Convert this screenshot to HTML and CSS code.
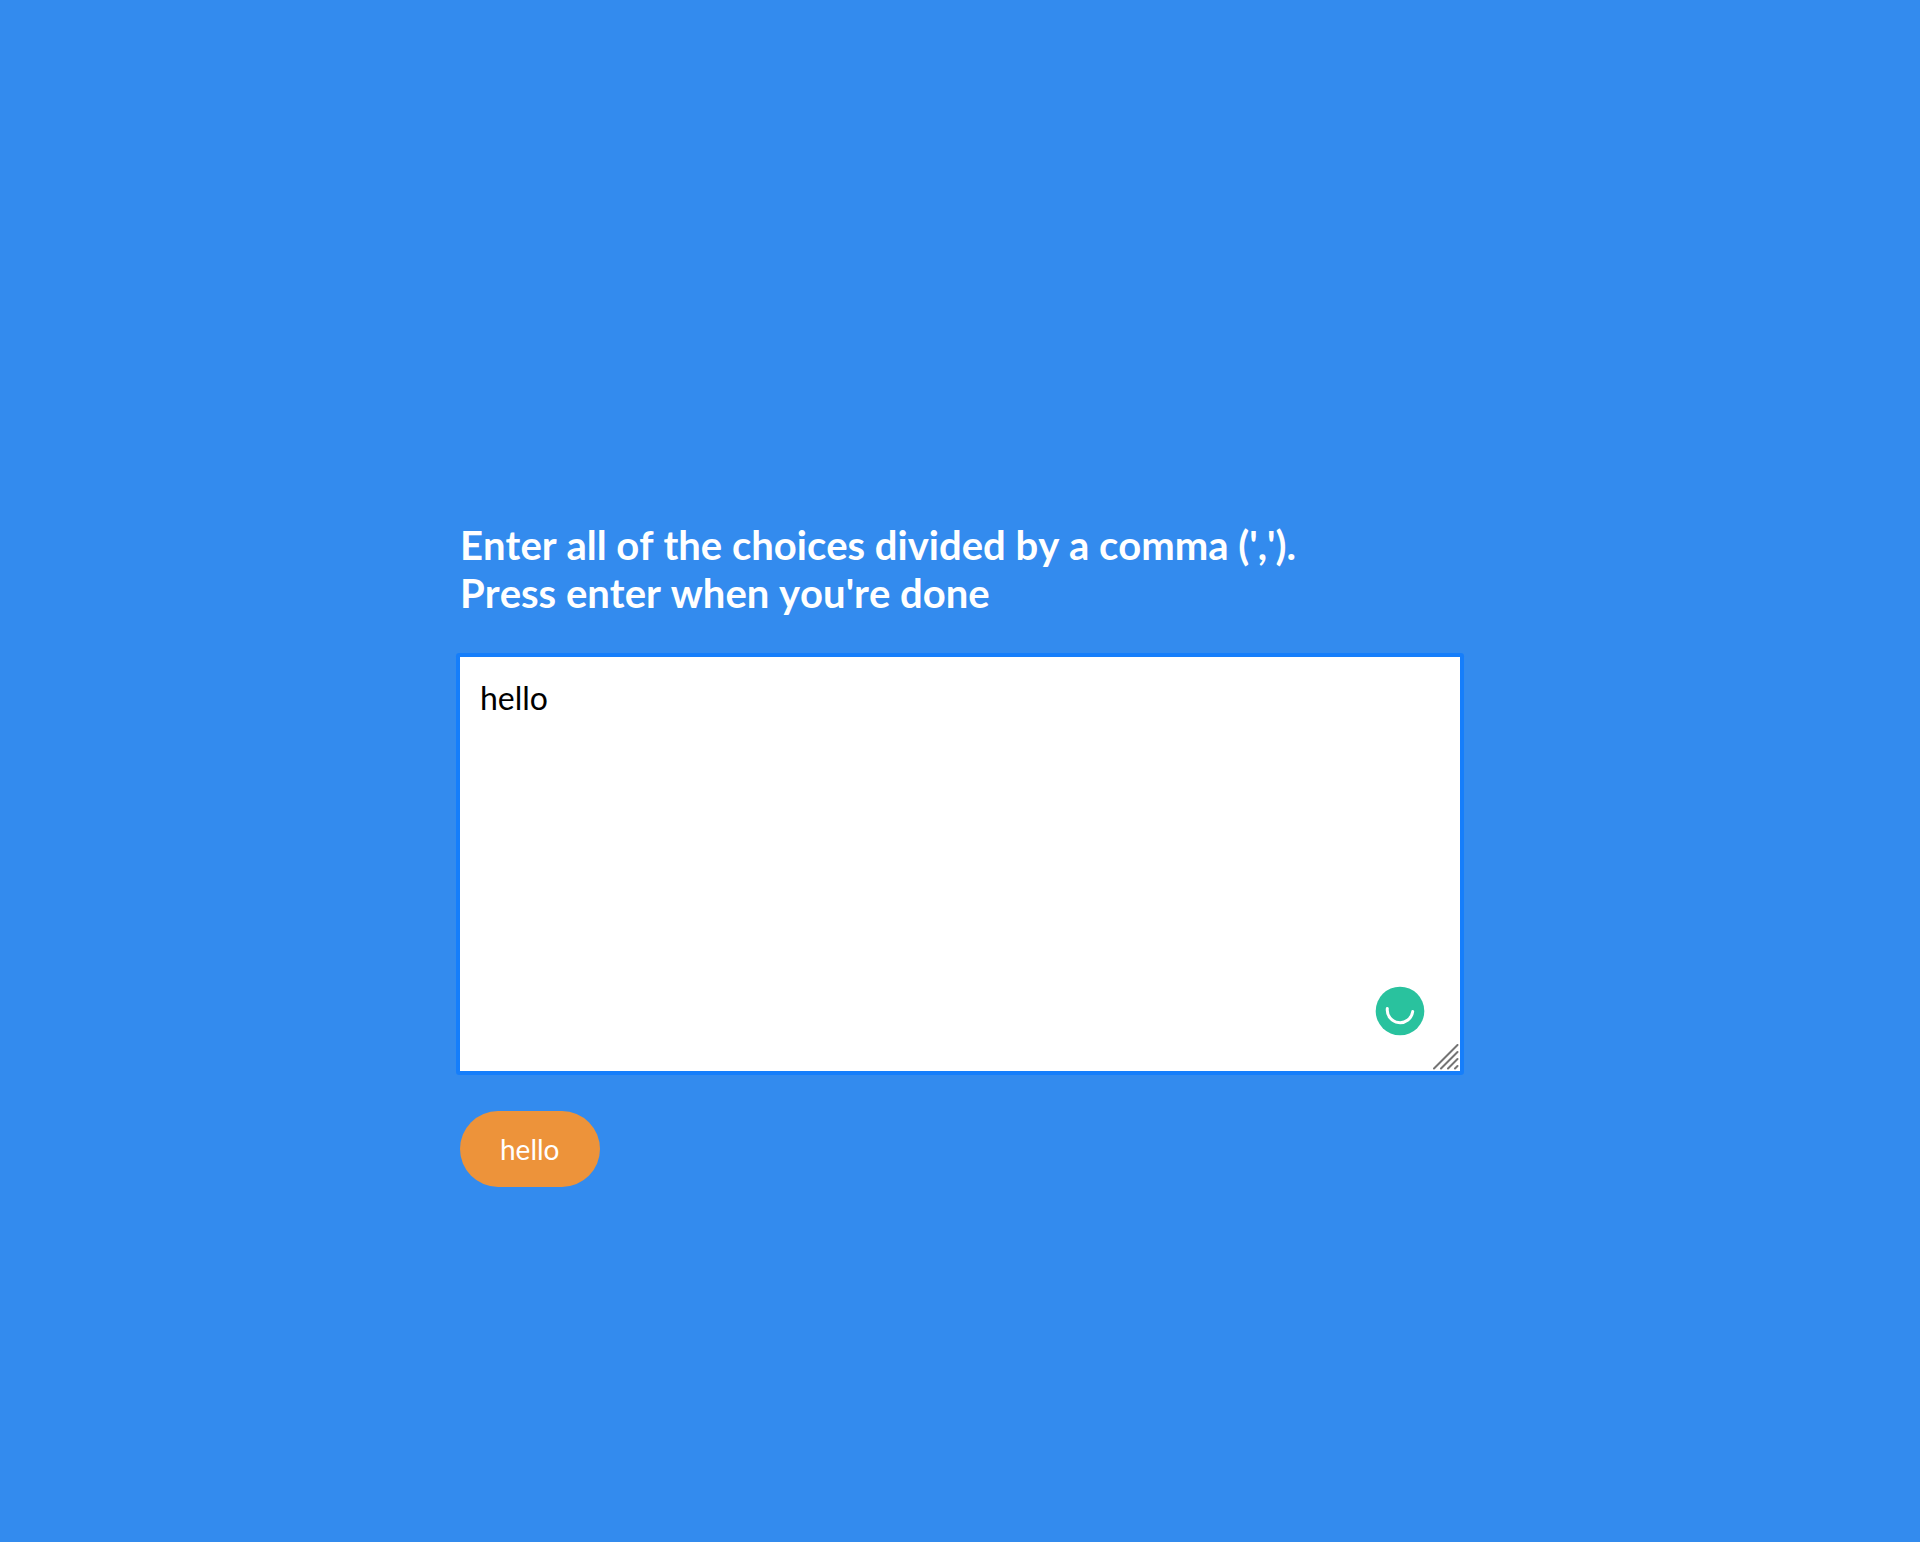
FILE: index.html
```html
<!DOCTYPE html>
<html lang="en">
<head>
  <meta charset="utf-8">
  <meta name="viewport" content="width=device-width, initial-scale=1">
  <title>Random Choice Picker</title>
  <link rel="stylesheet" href="styles.css">
</head>
<body>
  <main class="container">
    <label class="prompt" for="choices">Enter all of the choices divided by a comma (',').<br>Press enter when you're done</label>
    <div class="field">
      <textarea class="field-input" id="choices" spellcheck="false">hello</textarea>
      <svg class="checker" viewBox="0 0 50 50" aria-hidden="true">
        <circle cx="25" cy="25" r="24.3" fill="#29c29e"/>
        <path d="M12.300 22.600A12.790 12.790 0 0 0 37.700 25.600" fill="none" stroke="#fff" stroke-width="3" stroke-linecap="round"/>
      </svg>
      <svg class="grip" viewBox="0 0 26 26" aria-hidden="true">
        <path d="M1 24.500L24.500 1M8 24.500L24.500 8M15 24.500L24.500 15M22 24.500L24.500 22" fill="none" stroke="#747474" stroke-width="2" stroke-linecap="round"/>
      </svg>
    </div>
    <div class="tags">
      <span class="tag">hello</span>
    </div>
  </main>
</body>
</html>
```
FILE: styles.css
```css
* {
  box-sizing: border-box;
}

body {
  margin: 0;
  min-height: 100vh;
  background: #338bee;
  color: #fff;
  font-family: Lato, "Open Sans", sans-serif;
  font-kerning: none;
}

.container {
  width: 100%;
  max-width: 1000px;
  margin: 0 auto;
  padding: 521px 0 40px;
}

.prompt {
  display: block;
  margin-bottom: 40px;
  font-size: 40px;
  font-weight: 700;
  line-height: 48px;
}

.field {
  position: relative;
  display: flex;
  margin-bottom: 40px;
  border-radius: 1px;
  box-shadow: 0 0 0 4px #157efb;
}

.field-input {
  width: 100%;
  height: 414px;
  padding: 20px;
  border: 0;
  border-radius: 0;
  background: #fff;
  color: #000;
  font-family: inherit;
  font-size: 32px;
  font-kerning: none;
  line-height: 42px;
  resize: none;
  outline: 0;
}

.checker {
  position: absolute;
  right: 35px;
  bottom: 35px;
  width: 50px;
  height: 50px;
}

.grip {
  position: absolute;
  right: 1px;
  bottom: 1px;
  width: 26px;
  height: 26px;
}

.tags {
  display: flex;
  flex-wrap: wrap;
  gap: 20px;
}

.tag {
  padding: 20px 40px;
  border-radius: 40px;
  background: #ed933a;
  font-size: 28px;
  line-height: 36px;
}
```
